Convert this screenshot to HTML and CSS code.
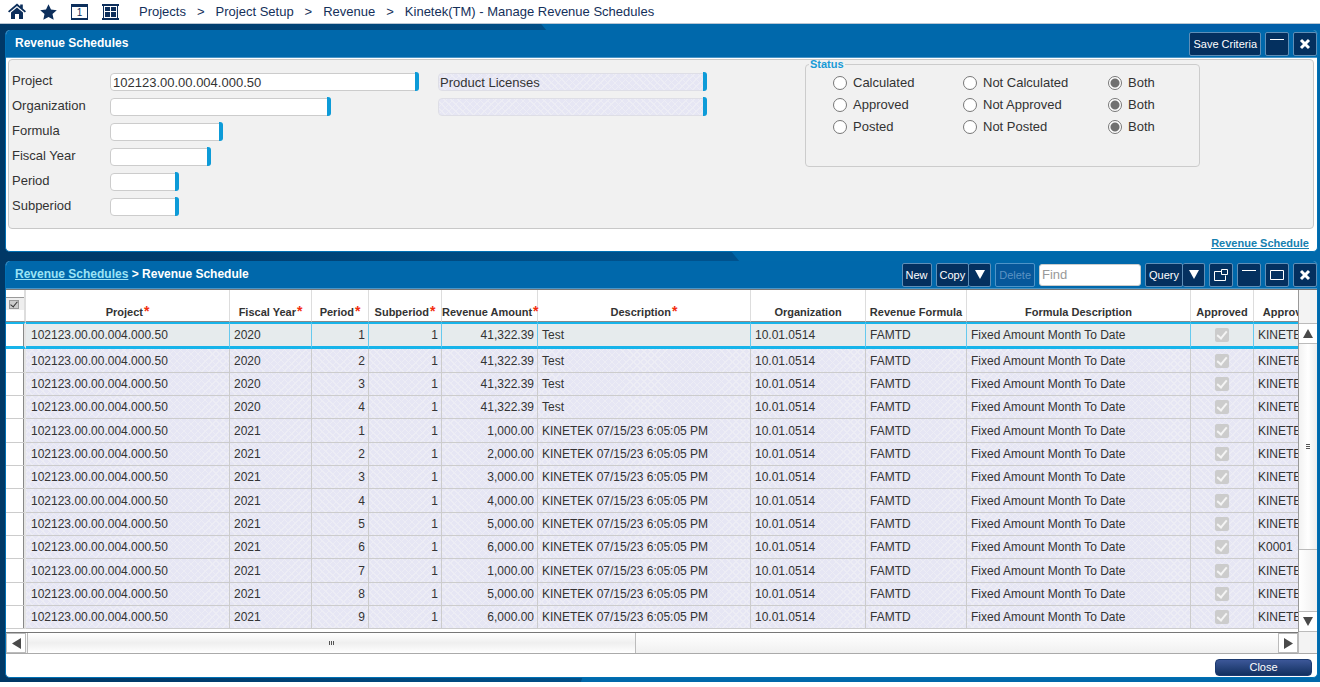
FILE: index.html
```html
<!DOCTYPE html>
<html lang="en">
<head>
<meta charset="utf-8">
<title>Manage Revenue Schedules</title>
<link rel="stylesheet" href="styles.css">
</head>
<body>
<header class="topbar">
  <nav class="shortcuts" aria-label="Shortcuts">
    <button class="icon-btn" aria-label="Home"><svg width="18" height="17" viewBox="0 0 18 17"><path d="M0 8.300 9 .6l3.200 2.700V1.500h2.600v4L18 8.300l-1.200 1.300L9 3 1.200 9.600z"/><path d="M3 9.500 9 4.500l6 5V16h-4v-5H7v5H3z"/></svg></button>
    <button class="icon-btn" aria-label="Favorites"><svg width="17" height="16" viewBox="0 0 17 16"><path d="M8.500.3 11 5.600l5.800.6-4.300 3.900 1.200 5.700-5.200-2.900-5.200 2.900 1.200-5.700L.2 6.200 6 5.600z"/></svg></button>
    <button class="icon-btn" aria-label="Open windows"><span class="window-count">1</span></button>
    <button class="icon-btn" aria-label="Menu"><svg width="17" height="16" viewBox="0 0 17 16"><path d="M0 0h17v2H0zM0 14h17v2H0zM1 2h1v12H1zm14 0h1v12h-1zM3 3h5v4H3zm6 0h5v4H9zM3 8h5v5H3zm6 0h5v5H9z"/></svg></button>
  </nav>
  <nav class="crumbs" aria-label="Breadcrumb">
    <span>Projects</span><span>&gt;</span><span>Project Setup</span><span>&gt;</span><span>Revenue</span><span>&gt;</span><span>Kinetek(TM) - Manage Revenue Schedules</span>
  </nav>
</header>

<main class="workspace">
  <section class="panel">
    <div class="title-bar">
      <h1 class="title">Revenue Schedules</h1>
      <div class="tools">
        <button class="tool">Save Criteria</button>
        <button class="tool tool-icon" aria-label="Minimize"><svg width="16" height="16" viewBox="0 0 16 16"><path d="M1 3.500h14"/></svg></button>
        <button class="tool tool-icon" aria-label="Close panel"><svg class="cross" width="16" height="16" viewBox="0 0 16 16"><path d="m4 4 8 8m0-8-8 8"/></svg></button>
      </div>
    </div>
    <form class="criteria">
      <div class="labels">
        <label for="project">Project</label>
        <label for="organization">Organization</label>
        <label for="formula">Formula</label>
        <label for="fiscal-year">Fiscal Year</label>
        <label for="period">Period</label>
        <label for="subperiod">Subperiod</label>
      </div>
      <div class="fields">
        <span class="field w-project"><input id="project" value="102123.00.00.004.000.50"></span>
        <span class="field w-org"><input id="organization"></span>
        <span class="field w-formula"><input id="formula"></span>
        <span class="field w-year"><input id="fiscal-year"></span>
        <span class="field w-period"><input id="period"></span>
        <span class="field w-period"><input id="subperiod"></span>
      </div>
      <div class="fields">
        <span class="field w-name"><input class="hatch" aria-label="Project name" value="Product Licenses" readonly></span>
        <span class="field w-name"><input class="hatch" aria-label="Organization name" readonly></span>
      </div>
      <fieldset class="status">
        <legend>Status</legend>
        <div class="choices">
          <label><input type="radio" name="calc">Calculated</label>
          <label><input type="radio" name="calc">Not Calculated</label>
          <label><input type="radio" name="calc" checked>Both</label>
          <label><input type="radio" name="appr">Approved</label>
          <label><input type="radio" name="appr">Not Approved</label>
          <label><input type="radio" name="appr" checked>Both</label>
          <label><input type="radio" name="post">Posted</label>
          <label><input type="radio" name="post">Not Posted</label>
          <label><input type="radio" name="post" checked>Both</label>
        </div>
      </fieldset>
    </form>
    <div class="link-row"><a href="#schedule">Revenue Schedule</a></div>
  </section>

  <section class="panel" id="schedule">
    <div class="title-bar">
      <h2 class="title"><a href="#">Revenue Schedules</a> &gt; Revenue Schedule</h2>
      <div class="tools">
        <button class="tool">New</button>
        <div class="split"><button class="tool">Copy</button><button class="tool tool-icon" aria-label="Copy options"><svg width="10" height="9" viewBox="0 0 10 9"><path class="solid" d="M0 0h10L5 9z"/></svg></button></div>
        <button class="tool" disabled>Delete</button>
        <input class="find" placeholder="Find" aria-label="Find">
        <div class="split"><button class="tool">Query</button><button class="tool tool-icon" aria-label="Query options"><svg width="10" height="9" viewBox="0 0 10 9"><path class="solid" d="M0 0h10L5 9z"/></svg></button></div>
        <button class="tool tool-icon" aria-label="Form view"><svg width="16" height="16" viewBox="0 0 16 16"><path d="M8.500 4.500h-7v9h11v-5M8.500 2.500h6v5h-6z"/></svg></button>
        <button class="tool tool-icon" aria-label="Minimize"><svg width="16" height="16" viewBox="0 0 16 16"><path d="M1 3.500h14"/></svg></button>
        <button class="tool tool-icon" aria-label="Maximize"><svg width="16" height="16" viewBox="0 0 16 16"><path d="M1.500 3.500h13v9h-13z"/></svg></button>
        <button class="tool tool-icon" aria-label="Close panel"><svg class="cross" width="16" height="16" viewBox="0 0 16 16"><path d="m4 4 8 8m0-8-8 8"/></svg></button>
      </div>
    </div>
    <div class="grid">
      <div class="table-view">
        <table>
          <colgroup><col class="c-sel"><col class="c-project"><col class="c-year"><col class="c-period"><col class="c-sub"><col class="c-amount"><col class="c-desc"><col class="c-org"><col class="c-formula"><col class="c-fdesc"><col class="c-appr"><col class="c-by"></colgroup>
          <thead><tr><th><span class="pick"><input type="checkbox" checked aria-label="Select all rows"></span></th><th>Project<i>*</i></th><th>Fiscal Year<i>*</i></th><th>Period<i>*</i></th><th>Subperiod<i>*</i></th><th>Revenue Amount<i>*</i></th><th>Description<i>*</i></th><th>Organization</th><th>Revenue Formula</th><th>Formula Description</th><th>Approved</th><th>Approved By</th></tr></thead>
          <tbody>
            <tr class="current"><td></td><td>102123.00.00.004.000.50</td><td>2020</td><td>1</td><td>1</td><td>41,322.39</td><td>Test</td><td>10.01.0514</td><td>FAMTD</td><td>Fixed Amount Month To Date</td><td><input type="checkbox" checked disabled aria-label="Approved"></td><td>KINETEK</td></tr>
            <tr><td></td><td>102123.00.00.004.000.50</td><td>2020</td><td>2</td><td>1</td><td>41,322.39</td><td>Test</td><td>10.01.0514</td><td>FAMTD</td><td>Fixed Amount Month To Date</td><td><input type="checkbox" checked disabled aria-label="Approved"></td><td>KINETEK</td></tr>
            <tr><td></td><td>102123.00.00.004.000.50</td><td>2020</td><td>3</td><td>1</td><td>41,322.39</td><td>Test</td><td>10.01.0514</td><td>FAMTD</td><td>Fixed Amount Month To Date</td><td><input type="checkbox" checked disabled aria-label="Approved"></td><td>KINETEK</td></tr>
            <tr><td></td><td>102123.00.00.004.000.50</td><td>2020</td><td>4</td><td>1</td><td>41,322.39</td><td>Test</td><td>10.01.0514</td><td>FAMTD</td><td>Fixed Amount Month To Date</td><td><input type="checkbox" checked disabled aria-label="Approved"></td><td>KINETEK</td></tr>
            <tr><td></td><td>102123.00.00.004.000.50</td><td>2021</td><td>1</td><td>1</td><td>1,000.00</td><td>KINETEK 07/15/23 6:05:05 PM</td><td>10.01.0514</td><td>FAMTD</td><td>Fixed Amount Month To Date</td><td><input type="checkbox" checked disabled aria-label="Approved"></td><td>KINETEK</td></tr>
            <tr><td></td><td>102123.00.00.004.000.50</td><td>2021</td><td>2</td><td>1</td><td>2,000.00</td><td>KINETEK 07/15/23 6:05:05 PM</td><td>10.01.0514</td><td>FAMTD</td><td>Fixed Amount Month To Date</td><td><input type="checkbox" checked disabled aria-label="Approved"></td><td>KINETEK</td></tr>
            <tr><td></td><td>102123.00.00.004.000.50</td><td>2021</td><td>3</td><td>1</td><td>3,000.00</td><td>KINETEK 07/15/23 6:05:05 PM</td><td>10.01.0514</td><td>FAMTD</td><td>Fixed Amount Month To Date</td><td><input type="checkbox" checked disabled aria-label="Approved"></td><td>KINETEK</td></tr>
            <tr><td></td><td>102123.00.00.004.000.50</td><td>2021</td><td>4</td><td>1</td><td>4,000.00</td><td>KINETEK 07/15/23 6:05:05 PM</td><td>10.01.0514</td><td>FAMTD</td><td>Fixed Amount Month To Date</td><td><input type="checkbox" checked disabled aria-label="Approved"></td><td>KINETEK</td></tr>
            <tr><td></td><td>102123.00.00.004.000.50</td><td>2021</td><td>5</td><td>1</td><td>5,000.00</td><td>KINETEK 07/15/23 6:05:05 PM</td><td>10.01.0514</td><td>FAMTD</td><td>Fixed Amount Month To Date</td><td><input type="checkbox" checked disabled aria-label="Approved"></td><td>KINETEK</td></tr>
            <tr><td></td><td>102123.00.00.004.000.50</td><td>2021</td><td>6</td><td>1</td><td>6,000.00</td><td>KINETEK 07/15/23 6:05:05 PM</td><td>10.01.0514</td><td>FAMTD</td><td>Fixed Amount Month To Date</td><td><input type="checkbox" checked disabled aria-label="Approved"></td><td>K0001</td></tr>
            <tr><td></td><td>102123.00.00.004.000.50</td><td>2021</td><td>7</td><td>1</td><td>1,000.00</td><td>KINETEK 07/15/23 6:05:05 PM</td><td>10.01.0514</td><td>FAMTD</td><td>Fixed Amount Month To Date</td><td><input type="checkbox" checked disabled aria-label="Approved"></td><td>KINETEK</td></tr>
            <tr><td></td><td>102123.00.00.004.000.50</td><td>2021</td><td>8</td><td>1</td><td>5,000.00</td><td>KINETEK 07/15/23 6:05:05 PM</td><td>10.01.0514</td><td>FAMTD</td><td>Fixed Amount Month To Date</td><td><input type="checkbox" checked disabled aria-label="Approved"></td><td>KINETEK</td></tr>
            <tr><td></td><td>102123.00.00.004.000.50</td><td>2021</td><td>9</td><td>1</td><td>6,000.00</td><td>KINETEK 07/15/23 6:05:05 PM</td><td>10.01.0514</td><td>FAMTD</td><td>Fixed Amount Month To Date</td><td><input type="checkbox" checked disabled aria-label="Approved"></td><td>KINETEK</td></tr>
          </tbody>
        </table>
      </div>
      <div class="vbar">
        <button class="arrow" aria-label="Scroll up"><svg width="10" height="9" viewBox="0 0 10 9"><path d="M0 9h10L5 0z"/></svg></button>
        <div class="track"><div class="thumb"><svg width="4" height="5" viewBox="0 0 4 5"><path d="M0 0h4v1H0zm0 2h4v1H0zm0 2h4v1H0z"/></svg></div></div>
        <button class="arrow" aria-label="Scroll down"><svg width="10" height="9" viewBox="0 0 10 9"><path d="M0 0h10L5 9z"/></svg></button>
      </div>
      <div class="hbar">
        <button class="arrow" aria-label="Scroll left"><svg width="9" height="11" viewBox="0 0 9 11"><path d="M9 0v11L0 5.500z"/></svg></button>
        <div class="track"><div class="thumb"><svg width="5" height="4" viewBox="0 0 5 4"><path d="M0 0h1v4H0zm2 0h1v4H2zm2 0h1v4H4z"/></svg></div></div>
        <button class="arrow" aria-label="Scroll right"><svg width="9" height="11" viewBox="0 0 9 11"><path d="M0 0v11l9-5.500z"/></svg></button>
      </div>
      <div class="corner"></div>
    </div>
    <div class="footer"><button class="close">Close</button></div>
  </section>
</main>
</body>
</html>
```
FILE: styles.css
```css
* { box-sizing: border-box; }
body { margin: 0; background: #fff; color: #333; font: 12px/16px "Liberation Sans", Arial, sans-serif; }
button, input { font: inherit; margin: 0; }
button { cursor: pointer; padding: 0; }

.topbar { display: flex; align-items: center; gap: 20px; height: 24px; padding-left: 8px; border-bottom: 1px solid #b9c6d3; color: #14305a; font-size: 13px; }
.shortcuts { display: flex; align-items: center; gap: 14px; }
.icon-btn { display: flex; border: 0; background: none; }
.icon-btn svg { fill: #0d2f5c; }
.window-count { width: 17px; height: 16px; border: 1px solid #0d2f5c; border-top-width: 3px; border-bottom-width: 2px; font-size: 10px; line-height: 11px; color: #0d2f5c; text-align: center; }
.crumbs { display: flex; gap: 11px; white-space: nowrap; }

.workspace {
  position: relative; display: flex; flex-direction: column; gap: 9px; padding: 6px 2px 4px 5px;
  background: linear-gradient(0deg, #005ea8, #005ea8) top right / 350px 6px no-repeat, #0069ab;
}
/* Dark facet behind the panels */
.workspace::before { content: ""; position: absolute; inset: 0; background: linear-gradient(90deg, #003866, #003c6d 14%, #004a80 33%, #00528d 50%); clip-path: polygon(0 0, 41% 0, 56% 36%, 44% 100%, 0 100%); }
.panel { position: relative; border: 1px solid #0070b4; border-width: 0 1px 1px; border-radius: 5px; background: #fff; overflow: hidden; }
.title-bar { display: flex; align-items: center; justify-content: space-between; height: 28px; padding-left: 9px; background: #0068ab; border-bottom: 1px solid #4a96c8; }
.title { margin: 0; padding-bottom: 2px; font-size: 12px; color: #fff; }
.title a { color: #9be3f5; }
.tools { display: flex; align-items: center; gap: 4px; }
.tool { display: flex; align-items: center; justify-content: center; height: 24px; padding: 0 3px; background: #04305f; border: 1px solid #5f8fb8; border-radius: 2px; color: #fff; font-size: 11px; }
.tool-icon { width: 24px; padding: 0; }
.tool svg { fill: none; stroke: #fff; stroke-width: 1; }
.tool .solid { fill: #fff; stroke: none; }
.tool .cross { stroke-width: 3; }
.tool:disabled { background: #06579a; color: #5c93c4; border-color: #4e94c8; }
.split { display: flex; }
.split .tool + .tool { width: 22px; border-left: 0; }
.find { width: 102px; height: 22px; padding: 0 2px; border: 1px solid #ccc; border-radius: 3px; font-size: 13px; }
.find::placeholder { color: #999; }

.criteria { display: grid; grid-template-columns: 98px 328px 367px 395px; height: 170px; margin: 1px 3px 0 2px; padding: 8px 3px; background: #f1f1f1; border: 1px solid #c8c8c8; border-radius: 4px; font-size: 13px; }
.labels, .fields { display: flex; flex-direction: column; }
.labels label { height: 25px; line-height: 25px; }
.fields { gap: 6px; padding-top: 4px; }
.field { position: relative; display: block; height: 19px; padding-top: 1px; }
.field::after { content: ""; position: absolute; top: 0; right: 0; width: 4px; height: 19px; background: #0d9bd8; border-radius: 0 3px 3px 0; }
.field input { display: block; width: 100%; height: 18px; padding: 0 2px; border: 1px solid #ccc; border-radius: 4px; background: #fff; color: #333; }
.w-project { width: 309px; }
.w-org { width: 221px; }
.w-formula { width: 113px; }
.w-year { width: 101px; }
.w-period { width: 69px; }
.w-name { width: 269px; }
td, .field .hatch {
  background:
    repeating-linear-gradient(45deg, transparent 0 4px, #ededf5 4px 5px),
    repeating-linear-gradient(-45deg, #e6e6f4 0 4px, #ededf5 4px 5px);
}
.field .hatch { border-color: #dedee6; padding: 0 1px; }
.status { min-width: 0; height: 109px; margin: -10px 0 0; padding: 0 0 0 27px; border: 1px solid #ccc; border-radius: 4px; }
.status legend { margin-left: -24px; padding: 0 1px; color: #179ad6; font-size: 11px; font-weight: bold; line-height: 12px; }
.choices { display: grid; grid-template-columns: 130px 145px 90px; grid-auto-rows: 22px; align-items: center; padding-top: 2px; }
.choices label { display: flex; align-items: center; gap: 6px; white-space: nowrap; }
.choices input { appearance: none; width: 14px; height: 14px; border: 1px solid #777; border-radius: 50%; background: #fff; }
.choices input:checked { background: radial-gradient(circle, #707070 0 4px, #fff 5px); }
.link-row { display: flex; justify-content: flex-end; padding: 6px 8px 0; font-size: 11px; font-weight: bold; }
.link-row a { color: #1580b0; }

.grid { display: grid; grid-template-columns: minmax(0, 1fr) 19px; border-top: 1px solid #777; }
.table-view { overflow: hidden; padding-bottom: 3px; }
table { width: 1335px; table-layout: fixed; border-collapse: separate; border-spacing: 0; }
.c-sel { width: 20px; }
.c-project { width: 204px; }
.c-year { width: 82px; }
.c-period { width: 57px; }
.c-sub { width: 73px; }
.c-amount { width: 96px; }
.c-desc { width: 213px; }
.c-org { width: 115px; }
.c-formula { width: 101px; }
.c-fdesc { width: 224px; }
.c-appr { width: 63px; }
.c-by { width: 87px; }
th { height: 32px; padding: 0 0 1px; border-right: 1px solid #ddd; border-bottom: 1px solid #888; font-size: 11px; vertical-align: bottom; white-space: nowrap; }
th i { margin-left: 1px; color: #f32c0e; font-size: 14px; font-style: normal; line-height: 12px; }
th:first-child { padding: 0; vertical-align: top; border-right: 2px solid #ddd; }
.pick { display: block; margin-top: 7px; padding: 2px 3px; height: 13px; border-top: 1px solid #999; background: #eee; line-height: 0; text-align: left; }
td { height: 23px; padding: 0 5px; border-right: 1px solid #ccc; border-bottom: 1px solid #ccc; white-space: nowrap; }
tr:nth-child(3n + 2) td { height: 24px; }
td:first-child { background: #fff; border-right: 2px solid #e4e4e4; box-shadow: inset -1px 0 #888; }
td:nth-child(3), td:nth-child(7), td:nth-child(8), td:nth-child(9), td:nth-child(10), td:nth-child(12) { padding: 0 4px; }
td:nth-child(4), td:nth-child(5), td:nth-child(6) { padding: 0 3px; text-align: right; }
td:nth-child(11) { padding: 0; text-align: center; line-height: 0; }
.current td { height: 27px; background: #e6ebed; border-top: 2px solid #17b4ea; border-bottom: 3px solid #17b4ea; border-right-color: #66c9ee; }
.current td:first-child { background: #fff; border-right-color: #e4e4e4; }
td input { appearance: none; display: inline-grid; place-items: center; width: 14px; height: 14px; border-radius: 2px; background: #ccc; }
td input::after { content: ""; width: 4px; height: 8px; margin-top: -2px; border: solid #f4f4f4; border-width: 0 2px 2px 0; transform: rotate(40deg); }
.pick input { appearance: none; display: inline-grid; place-items: center; width: 10px; height: 9px; border: 1px solid #999; background: #ccc; }
.pick input::after { content: ""; width: 3px; height: 6px; margin-top: -2px; border: solid #333; border-width: 0 1px 1px 0; transform: rotate(40deg); }

.arrow { flex: none; display: flex; align-items: center; justify-content: center; border: 1px solid #bbb; background: #fff; }
.arrow svg { fill: #4a4a4a; }
.thumb { display: flex; align-items: center; justify-content: center; border: 1px solid #bbb; }
.thumb svg { fill: #555; }
.track { flex: 1; min-width: 0; }
.vbar { display: flex; flex-direction: column; padding-top: 33px; border-left: 1px solid #999; background: #f3f3f3; }
.vbar .arrow { height: 21px; border-left: 0; border-right: 0; }
.vbar .track { background: linear-gradient(90deg, #fff, #f0f0f0); }
.vbar .thumb { height: 77%; border-width: 0 0 1px; background: linear-gradient(90deg, #f2f2f2, #fff 50%, #eee); }
.hbar { display: flex; height: 22px; border-top: 1px solid #777; border-bottom: 1px solid #aaa; }
.hbar .arrow { width: 20px; }
.hbar .track { background: linear-gradient(#fff, #f0f0f0); }
.hbar .thumb { width: 609px; max-width: 49%; height: 100%; margin-left: 1px; border-width: 0 1px; background: linear-gradient(#fff, #efefef 50%, #fff); }
.corner { border-bottom: 1px solid #aaa; border-left: 1px solid #bbb; background: #f3f3f3; }
.footer { display: flex; justify-content: flex-end; padding: 5px 5px 1px; }
.close { width: 97px; height: 17px; border: 1px solid #1c3a70; border-radius: 4px; background: linear-gradient(#3c5798, #12305f); color: #fff; line-height: 15px; font-size: 11px; }
```
